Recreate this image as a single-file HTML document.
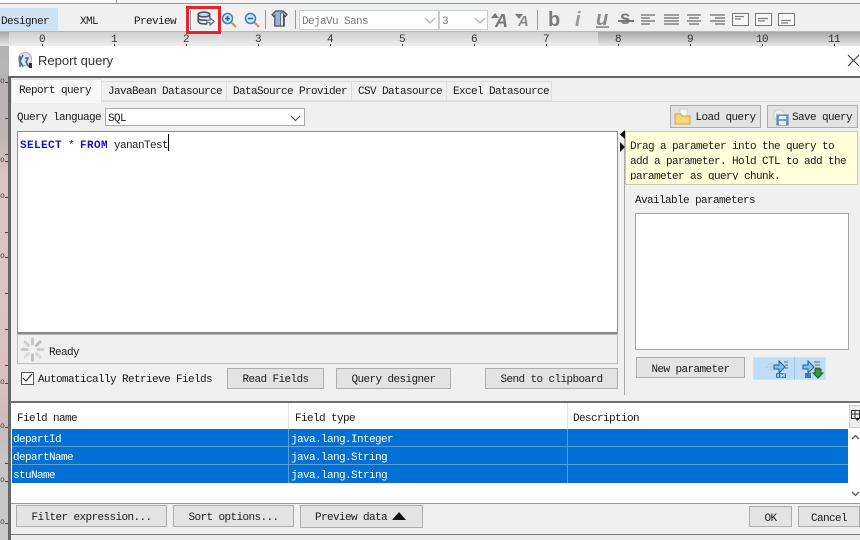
<!DOCTYPE html>
<html><head><meta charset="utf-8"><style>
html,body{margin:0;padding:0;background:#f0f0f0}
#r{position:relative;width:860px;height:540px;overflow:hidden;background:#f0f0f0;font-family:"Liberation Mono",monospace;font-size:11px;letter-spacing:-.6px;color:#1a1a1a}
#r div{position:absolute;box-sizing:border-box;white-space:nowrap}
.t{line-height:14px;margin-top:2px}
.p{line-height:14px}
.b{background:#e3e3e3;border:1px solid #adadad;text-align:center;line-height:22px}
.b2{line-height:24px}
.n{font-size:11px;color:#333;width:20px;text-align:center;top:35px;line-height:10px}
.k{width:1px;height:2px;top:44px;background:#333}
.w{color:#fff}
.m{left:5px;width:3px;height:1px;background:#444}
.o{left:0;width:6px;font-size:8px;line-height:8px;letter-spacing:0;color:#444}
svg{position:absolute;overflow:visible}
.g{font-family:"Liberation Sans",sans-serif;letter-spacing:0;font-weight:bold;line-height:22px}
</style></head><body><div id="r">
<!-- top -->
<div style="left:0;top:0;width:860px;height:4px;background:#f5f5f5;border-bottom:1px solid #999"></div>
<div style="left:0;top:0;width:117px;height:3px;background:#fff;border-right:1px solid #999"></div>
<div style="left:0;top:4px;width:860px;height:28px;background:#f0f0f0;border-bottom:1px solid #a9bccc"></div>
<div style="left:0;top:8px;width:58px;height:23px;background:#cfe3f5"></div>
<div class="t" style="left:1px;top:13px">Designer</div>
<div class="t" style="left:80px;top:13px">XML</div>
<div class="t" style="left:134px;top:13px">Preview</div>
<div style="left:190px;top:10px;width:1px;height:20px;background:#999"></div>
<div style="left:186px;top:6px;width:35px;height:28px;border:3px solid #e1272b;z-index:5"></div>
<svg style="left:197px;top:11px" width="18" height="16" viewBox="0 0 22 19"><ellipse cx="8.500" cy="4" rx="7" ry="3" fill="#c6d8e8" stroke="#4c5460" stroke-width="2"/><path d="M1.500 4v8c0 2 3 3.500 7 3.500h4M15.500 4v4M1.500 8c0 2 3 3 7 3h3" fill="none" stroke="#4c5460" stroke-width="2"/><path d="M12 11h4V8l5 4.500L16 17v-3h-4z" fill="#e8eef4" stroke="#5a6270" stroke-width="1.400"/></svg>
<svg style="left:221px;top:12px" width="16" height="16" viewBox="0 0 16 16"><circle cx="6.500" cy="6.500" r="5" fill="#cfe4f7" stroke="#3f7fc0" stroke-width="1.500"/><path d="M4 6.500h5M6.500 4v5" stroke="#1c5fa8" stroke-width="1.500"/><path d="M10.500 10.500l4.500 4.500" stroke="#b9985a" stroke-width="2"/></svg>
<svg style="left:244px;top:12px" width="16" height="16" viewBox="0 0 16 16"><circle cx="6.500" cy="6.500" r="5" fill="#cfe4f7" stroke="#3f7fc0" stroke-width="1.500"/><path d="M4 6.500h5" stroke="#1c5fa8" stroke-width="1.500"/><path d="M10.500 10.500l4.500 4.500" stroke="#b9985a" stroke-width="2"/></svg>
<div style="left:265px;top:10px;width:1px;height:19px;background:#999"></div>
<svg style="left:271px;top:10px" width="17" height="17" viewBox="0 0 18 18"><path d="M5 1h8l4 4-2 2-1-1v11H4V6L3 7 1 5z" fill="#8fb5cf" stroke="#445" stroke-width="1.200"/><path d="M10 3h3v14h-3z" fill="#eee" stroke="#445" stroke-width=".8"/></svg>
<div style="left:295px;top:10px;width:1px;height:19px;background:#999"></div>
<div class="p" style="left:299px;top:10px;width:140px;height:20px;background:#fff;border:1px solid #c4ccd4;padding:4px 0 0 2px;color:#777">DejaVu Sans</div>
<svg style="left:424px;top:17px" width="11" height="7"><path d="M1 1l5 5 5-5" fill="none" stroke="#aaa" stroke-width="1.200"/></svg>
<div class="p" style="left:439px;top:10px;width:49px;height:20px;background:#fff;border:1px solid #c4ccd4;padding:4px 0 0 2px;color:#777">3</div>
<svg style="left:474px;top:17px" width="11" height="7"><path d="M1 1l5 5 5-5" fill="none" stroke="#aaa" stroke-width="1.200"/></svg>
<div class="g" style="left:495px;top:10px;font-size:18px;font-style:italic;color:#777">A</div>
<svg style="left:491px;top:13px" width="9" height="6"><path d="M0 5L4 0l4 5z" fill="#777"/></svg>
<div class="g" style="left:518px;top:11px;font-size:15px;font-style:italic;color:#8a8a8a">A</div>
<svg style="left:515px;top:14px" width="8" height="5"><path d="M0 0h8L4 5z" fill="#777"/></svg>
<div style="left:537px;top:10px;width:1px;height:20px;background:#999"></div>
<div class="g" style="left:548px;top:9px;font-size:20px;color:#7b7b7b">b</div>
<div class="g" style="left:575px;top:9px;font-size:20px;font-style:italic;color:#999">i</div>
<div class="g" style="left:596px;top:8px;font-size:20px;font-style:italic;color:#8a8a8a">u</div>
<div style="left:596px;top:26px;width:13px;height:2px;background:#999"></div>
<div class="g" style="left:620px;top:8px;font-size:19px;color:#7b7b7b">s</div>
<div style="left:618px;top:20px;width:16px;height:2px;background:#777"></div>
<svg style="left:641px;top:14px" width="154" height="14" viewBox="0 0 154 14" stroke="#808080" stroke-width="1.600">
<path d="M0 1h14M0 4h9M0 7h14M0 10h9"/><path d="M23 1h15M23 4h15M23 7h15M23 10h15"/><path d="M46 1h14M48 4h10M46 7h14M48 10h10"/><path d="M69 1h15M74 4h10M69 7h15M74 10h10"/>
<g fill="#f8f8f8" stroke-width="1" stroke="#777"><rect x="91.500" y="-.5" width="16" height="12"/><rect x="114.500" y="-.5" width="16" height="12"/><rect x="137.500" y="-.5" width="16" height="12"/></g>
<path d="M94 2.500h9M94 5h6M117 4.500h10M117 7h7M140 6.500h10M140 9h7" stroke-width="1.300"/></svg>
<!-- ruler -->
<div style="left:0;top:32px;width:860px;height:14px;background:linear-gradient(#a8a8a8,#e6e6e6)"></div>
<div style="left:9px;top:32px;width:589px;height:14px;background:linear-gradient(#cfcfcf,#eeeeee)"></div>
<div class="n" style="left:32px">0</div><div class="n" style="left:104px">1</div><div class="n" style="left:176px">2</div><div class="n" style="left:248px">3</div><div class="n" style="left:320px">4</div><div class="n" style="left:392px">5</div><div class="n" style="left:464px">6</div><div class="n" style="left:536px">7</div><div class="n" style="left:608px">8</div><div class="n" style="left:680px">9</div><div class="n" style="left:752px">10</div><div class="n" style="left:824px">11</div>
<div class="k" style="left:42px"></div><div class="k" style="left:114px"></div><div class="k" style="left:186px"></div><div class="k" style="left:258px"></div><div class="k" style="left:330px"></div><div class="k" style="left:402px"></div><div class="k" style="left:474px"></div><div class="k" style="left:546px"></div><div class="k" style="left:618px"></div><div class="k" style="left:690px"></div><div class="k" style="left:762px"></div><div class="k" style="left:834px"></div>
<!-- left strip -->
<div style="left:0;top:46px;width:9px;height:494px;background:linear-gradient(#b4b4b4 0,#bdb5b5 90px,#dcc4c4 130px,#dcc0c0 340px,#cdb9b9 380px,#c6c6c6 420px,#c9c9c9 494px)"></div>
<div style="left:8px;top:76px;width:3px;height:464px;background:#666"></div>
<div class="m" style="top:82px"></div><div class="o" style="top:78px">o</div>
<div class="m" style="top:118px"></div>
<div class="m" style="top:154px"></div>
<div class="m" style="top:161px"></div><div class="o" style="top:157px">o</div>
<div class="m" style="top:197px"></div><div class="o" style="top:193px">o</div>
<div class="m" style="top:232px"></div>
<div class="m" style="top:257px"></div><div class="o" style="top:253px">o</div>
<div class="m" style="top:293px"></div>
<div class="m" style="top:329px"></div>
<div class="m" style="top:365px"></div>
<div class="m" style="top:383px"></div><div class="o" style="top:379px">o</div>
<div class="m" style="top:427px"></div><div class="o" style="top:423px">o</div>
<div class="m" style="top:463px"></div>
<div class="m" style="top:481px"></div><div class="o" style="top:477px">o</div>
<div class="m" style="top:523px"></div><div class="o" style="top:519px">o</div>
<!-- dialog -->
<div style="left:11px;top:76px;width:849px;height:458px;background:#f0f0f0"></div>
<div style="left:9px;top:46px;width:851px;height:32px;background:#fff;border-bottom:2px solid #666"></div>
<svg style="left:17px;top:52px" width="16" height="17" viewBox="0 0 16 17"><circle cx="8" cy="7" r="6.500" fill="#dfe5ee" stroke="#aab" /><path d="M3 4v11M6 3l-3 6 3 6M8 6h3l-2 4 3 5" fill="none" stroke="#47668f" stroke-width="1.500"/><path d="M12 11h3v5h-3z" fill="#333"/></svg>
<div style="left:38px;top:52px;font:13px/17px 'Liberation Sans',sans-serif;letter-spacing:0;color:#333">Report query</div>
<svg style="left:848px;top:55px" width="11" height="11"><path d="M0 0l11 11M11 0L0 11" stroke="#333" stroke-width="1"/></svg>
<!-- tabs -->
<div style="left:11px;top:101px;width:849px;height:1px;background:#dcdcdc"></div>
<div class="p" style="left:11px;top:79px;width:91px;height:24px;background:#f8f8f8;border:1px solid #e2e2e2;border-bottom:0;padding:4px 0 0 7px">Report query</div>
<div class="p" style="left:102px;top:81px;width:125px;height:20px;border:1px solid #dedede;border-left:0;padding:3px 0 0 6px;background:#f0f0f0">JavaBean Datasource</div>
<div class="p" style="left:227px;top:81px;width:125px;height:20px;border:1px solid #dedede;border-left:0;padding:3px 0 0 6px;background:#f0f0f0">DataSource Provider</div>
<div class="p" style="left:352px;top:81px;width:95px;height:20px;border:1px solid #dedede;border-left:0;padding:3px 0 0 6px;background:#f0f0f0">CSV Datasource</div>
<div class="p" style="left:447px;top:81px;width:105px;height:20px;border:1px solid #dedede;border-left:0;padding:3px 0 0 6px;background:#f0f0f0">Excel Datasource</div>
<!-- query language -->
<div class="t" style="left:17px;top:109px">Query language</div>
<div class="p" style="left:105px;top:108px;width:200px;height:18px;background:#fff;border:1px solid #aaa;padding:3px 0 0 2px">SQL</div>
<svg style="left:290px;top:115px" width="11" height="7"><path d="M1 1l4.500 4.500L10 1" fill="none" stroke="#555" stroke-width="1.200"/></svg>
<div class="b b2" style="left:670px;top:105px;width:91px;height:23px;padding-left:20px">Load query</div>
<svg style="left:675px;top:109px" width="16" height="16" viewBox="0 0 16 16"><path d="M5 0h7v8H5z" fill="#f6f6f6" stroke="#ccc"/><path d="M0 5h6l1 2h8v8H0z" fill="#f4d777" stroke="#c9a94c"/></svg>
<div class="b b2" style="left:767px;top:105px;width:91px;height:23px;padding-left:19px">Save query</div>
<svg style="left:773px;top:109px" width="16" height="17" viewBox="0 0 16 17"><circle cx="6" cy="6" r="5.500" fill="#eee" stroke="#ccc"/><path d="M4 6h11v10H4z" fill="#6f9fd0" stroke="#4a7cb3"/><path d="M6 7h7v3H6zM6 12h7v4H6z" fill="#e9f0f8"/></svg>
<!-- editor -->
<div style="left:17px;top:131px;width:601px;height:203px;background:#fff;border:1px solid #8f8f8f;border-bottom:2px solid #8a8a8a"></div>
<div class="t" style="left:20px;top:137px;color:#222"><b style="color:#1111d8;letter-spacing:.4px">SELECT</b> * <b style="color:#1111d8;letter-spacing:.4px">FROM</b> yananTest</div>
<div style="left:168px;top:134px;width:1px;height:17px;background:#000"></div>
<div style="left:17px;top:334px;width:601px;height:30px;border:1px solid #bbb;background:#f0f0f0"></div>
<svg style="left:20px;top:337px" width="25" height="25" viewBox="0 0 25 25" stroke-width="3" stroke-linecap="round"><path d="M12.500 2v5" stroke="#c9c9c9"/><path d="M20 5l-3.500 3.500" stroke="#bbb"/><path d="M23 12.500h-5" stroke="#ccc"/><path d="M20 20l-3.500-3.500" stroke="#d8d8d8"/><path d="M12.500 23v-5" stroke="#c0c0c0"/><path d="M5 20l3.500-3.500" stroke="#ddd"/><path d="M2 12.500h5" stroke="#c6c6c6"/><path d="M5 5l3.500 3.500" stroke="#d0d0d0"/></svg>
<div class="t" style="left:49px;top:344px">Ready</div>
<div style="left:21px;top:372px;width:13px;height:13px;background:#fff;border:1px solid #555"></div>
<svg style="left:22px;top:373px" width="11" height="10"><path d="M1 5l3 3 6-7" fill="none" stroke="#333" stroke-width="1.200"/></svg>
<div class="t" style="left:38px;top:371px">Automatically Retrieve Fields</div>
<div class="b" style="left:227px;top:368px;width:97px;height:21px">Read Fields</div>
<div class="b" style="left:336px;top:368px;width:115px;height:21px">Query designer</div>
<div class="b" style="left:485px;top:368px;width:133px;height:21px">Send to clipboard</div>
<!-- splitter & right -->
<div style="left:624px;top:131px;width:1px;height:264px;background:#aaa"></div>
<svg style="left:620px;top:130px" width="5" height="24"><path d="M5 0v9L0 4.500zM0 12v10l5-5z" fill="#111"/></svg>
<div style="left:625px;top:131px;width:233px;height:54px;background:#ffffd9;border:1px solid #c8c8a8"><div style="left:4px;top:8px;width:226px;height:40px;overflow:hidden;line-height:15px;white-space:normal">Drag a parameter into the query to<br>add a parameter. Hold CTL to add the<br>parameter as query chunk.</div></div>
<div class="t" style="left:635px;top:192px">Available parameters</div>
<div style="left:635px;top:213px;width:214px;height:137px;background:#fff;border:1px solid #a5a5a5"></div>
<div class="b b2" style="left:636px;top:357px;width:109px;height:21px">New parameter</div>
<div style="left:753px;top:357px;width:73px;height:23px;background:#bfddf8;border:1px solid #cde3f6"></div>
<div style="left:794px;top:357px;width:1px;height:23px;background:#9fc5e8"></div>
<svg style="left:765px;top:360px" width="24" height="18" viewBox="0 0 24 18"><path d="M2 4h6M0 7h8M3 10h5" stroke="#a5c6e4"/><path d="M9 5h5V1l6 6-6 6V9H9z" fill="#7cc4ec" stroke="#275b8c"/><path d="M19 2h4M20 5h3M20 8h3" stroke="#667"/><path d="M11 13h10v5H11z" fill="#2f7fbc"/><path d="M13 14v3M16 14v3l3-3v3" stroke="#fff" fill="none"/></svg>
<svg style="left:802px;top:360px" width="22" height="19" viewBox="0 0 22 19"><path d="M1 5h5V1l6 6-6 6V9H1z" fill="#7cc4ec" stroke="#275b8c"/><path d="M12 2h6M13 5h5M13 8h5" stroke="#667"/><path d="M13 9h6v4h2l-5 5-5-5h2z" fill="#2e9a38" stroke="#1f5f24"/><path d="M3 13h6v5H3z" fill="#2f7fbc"/></svg>
<!-- table -->
<div style="left:11px;top:401px;width:849px;height:2px;background:#707070"></div>
<div style="left:11px;top:403px;width:849px;height:100px;background:#fff"></div>
<div class="t" style="left:17px;top:410px">Field name</div>
<div class="t" style="left:295px;top:410px">Field type</div>
<div class="t" style="left:573px;top:410px">Description</div>
<div style="left:288px;top:403px;width:1px;height:26px;background:#e6e6e6"></div>
<div style="left:567px;top:403px;width:1px;height:26px;background:#e6e6e6"></div>
<div style="left:12px;top:429px;width:836px;height:54px;background:#0070d4"></div>
<div style="left:12px;top:446px;width:836px;height:1px;background:#5d9bd3"></div>
<div style="left:12px;top:464px;width:836px;height:1px;background:#5d9bd3"></div>
<div style="left:288px;top:429px;width:1px;height:54px;background:#5d9bd3"></div>
<div style="left:567px;top:429px;width:1px;height:54px;background:#5d9bd3"></div>
<div class="t w" style="left:13px;top:431px">departId</div><div class="t w" style="left:291px;top:431px">java.lang.Integer</div>
<div class="t w" style="left:13px;top:449px">departName</div><div class="t w" style="left:291px;top:449px">java.lang.String</div>
<div class="t w" style="left:13px;top:467px">stuName</div><div class="t w" style="left:291px;top:467px">java.lang.String</div>
<div style="left:849px;top:405px;width:11px;height:23px;background:#eee;border:1px solid #ccc;border-right:0"></div>
<svg style="left:851px;top:410px" width="9" height="13"><path d="M.5.500h8v8h-8zM.5 4h8M4 .500v8" fill="none" stroke="#333"/><path d="M4 8h5l-2.500 3z" fill="#111"/></svg>
<svg style="left:851px;top:434px" width="9" height="6"><path d="M1 5l3.500-3.500L8 5" fill="none" stroke="#555" stroke-width="1.300"/></svg>
<svg style="left:851px;top:491px" width="9" height="6"><path d="M1 1l3.500 3.500L8 1" fill="none" stroke="#555" stroke-width="1.300"/></svg>
<div style="left:11px;top:503px;width:849px;height:1px;background:#999"></div>
<!-- bottom -->
<div class="b b2" style="left:16px;top:505px;width:151px;height:22px">Filter expression...</div>
<div class="b b2" style="left:173px;top:505px;width:121px;height:22px">Sort options...</div>
<div class="b b2" style="left:300px;top:505px;width:123px;height:23px;text-align:left;padding-left:14px">Preview data</div>
<svg style="left:392px;top:512px" width="15" height="8"><path d="M0 8L7 0l7 8z" fill="#111"/></svg>
<div class="b b2" style="left:749px;top:506px;width:43px;height:21px">OK</div>
<div class="b b2" style="left:798px;top:506px;width:62px;height:21px">Cancel</div>
<div style="left:11px;top:534px;width:849px;height:1px;background:#777"></div>
<div style="left:11px;top:535px;width:849px;height:5px;background:#ececec"></div>
</div></body></html>
